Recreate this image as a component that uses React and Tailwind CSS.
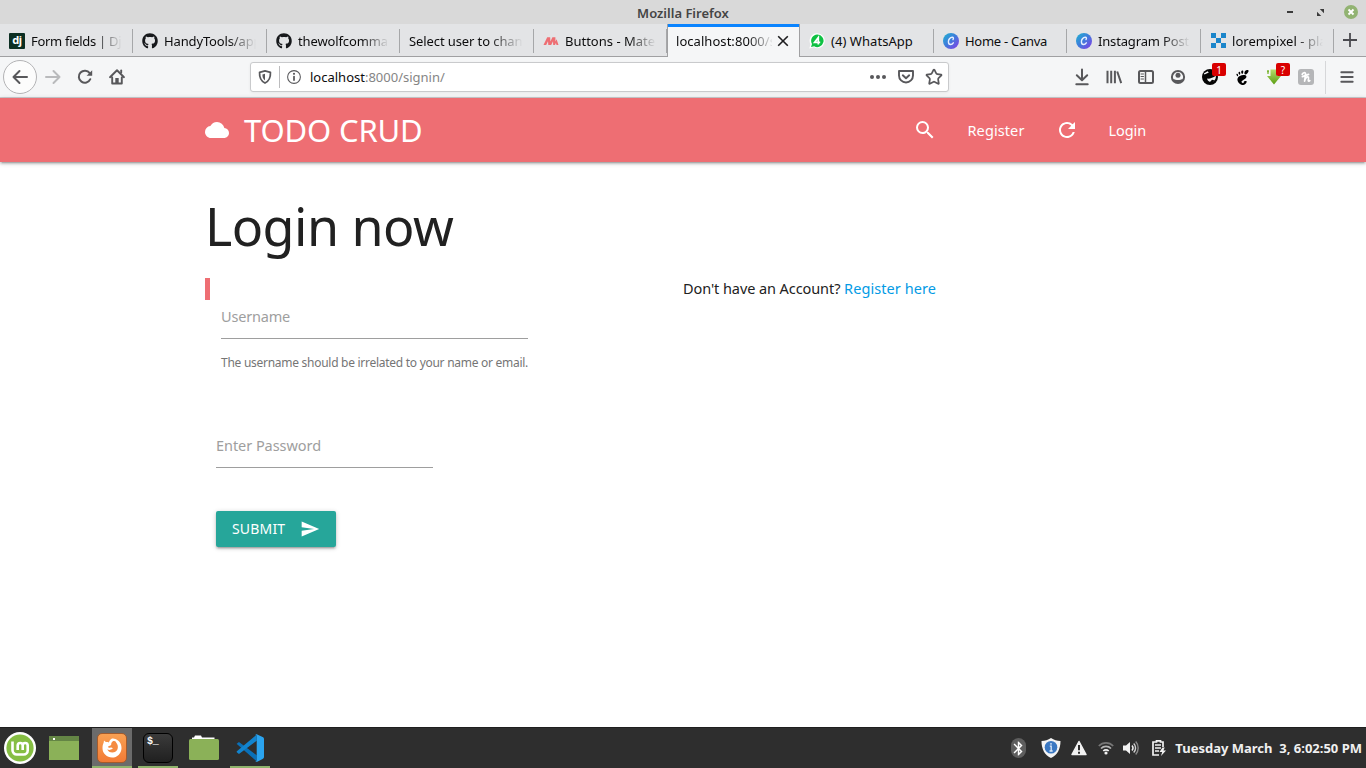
import React from "react";
import { FaGithub } from "react-icons/fa";
import { MdCloud, MdSearch, MdRefresh, MdSend, MdBluetooth } from "react-icons/md";
import { SiGnome } from "react-icons/si";
import { Star } from "lucide-react";

/* ---------- favicons ---------- */

const DjangoIcon = () => (
  <span className="flex size-4 items-center justify-center overflow-hidden rounded-[1px] bg-[#0c2f23] text-[11px] leading-none font-bold tracking-[-0.4px] text-white">
    <span className="-mt-[3px]">dj</span>
  </span>
);

const MaterializeIcon = () => (
  <svg viewBox="0 0 16 16" className="size-4" fill="#ee6e73">
    <path d="M0.500 12L4.200 4.200h3L7.400 8.600 9.400 4.200h3L12.400 8.400 13.600 6.200 15.500 12h-2L12.900 10 12 12H10.200L10 8.200 8.200 12H5.300L5 8.200 3.200 12z" />
  </svg>
);

const WhatsappIcon = () => (
  <svg viewBox="0 0 16 16" className="size-4">
    <path d="M8.3 0.3a7.4 7.4 0 1 1-3.3 14L0.3 15.6l1.2-4.4A7.4 7.4 0 0 1 8.3 0.3z" fill="#fff" />
    <path d="M8.2 1.5a6.3 6.3 0 1 1-3 11.8L2 14l1-3A6.3 6.3 0 0 1 8.2 1.5z" fill="#0fc143" />
    <path d="M9.300 11.600V4.600L5.600 9.400h5.600" fill="none" stroke="#fff" strokeWidth="1.700" />
  </svg>
);

const CanvaIcon = () => (
  <span className="flex size-4 items-center justify-center rounded-full bg-linear-to-br from-[#10b3cf] via-[#3f78dc] to-[#7a2be6]">
    <svg viewBox="0 0 16 16" className="size-4" fill="none" stroke="#e8f0ff" strokeWidth="1.400" strokeLinecap="round">
      <path d="M10 6.600c.8-1 .5-2.300-.8-2.300C7 4.300 5.400 6.600 5.400 8.700c0 1.700.9 2.800 2.200 2.800 1.200 0 2.200-.9 2.700-1.700" />
    </svg>
  </span>
);

const LorempixelIcon = () => (
  <svg viewBox="0 0 15 15" className="size-[15px]" fill="#1b86cb">
    <path d="M0 0h5v5H0zM10 0h5v5h-5zM5 5h5v5H5zM0 10h5v5H0zM10 10h5v5h-5z" />
  </svg>
);

const tabs = [
  { icon: <DjangoIcon />, title: "Form fields | Djan", width: "w-[133px]", tracking: "tracking-[-0.3px]" },
  { icon: <FaGithub className="size-4 text-[#17191c]" />, title: "HandyTools/app", width: "w-[134px]", tracking: "tracking-[-0.14px]" },
  { icon: <FaGithub className="size-4 text-[#17191c]" />, title: "thewolfcomman", width: "w-[133px]", tracking: "tracking-[-0.12px]" },
  { icon: null, title: "Select user to change", width: "w-[134px]", tracking: "tracking-[-0.1px]" },
  { icon: <MaterializeIcon />, title: "Buttons - Materi", width: "w-[133px]", tracking: "tracking-normal" },
  { icon: null, title: "localhost:8000/si", width: "w-[133px]", tracking: "tracking-[0.05px]", active: true },
  { icon: <WhatsappIcon />, title: "(4) WhatsApp", width: "w-[134px]", tracking: "tracking-[0.05px]", full: true },
  { icon: <CanvaIcon />, title: "Home - Canva", width: "w-[133px]", tracking: "tracking-[-0.28px]", full: true },
  { icon: <CanvaIcon />, title: "Instagram Posts", width: "w-[134px]", tracking: "tracking-[-0.16px]" },
  { icon: <LorempixelIcon />, title: "lorempixel - plac", width: "w-[133px]", tracking: "tracking-[0.04px]" },
];

function Tab({ tab }) {
  if (tab.active) {
    return (
      <div className={`${tab.width} z-10 -mb-px flex shrink-0 items-center border-x border-[#a0a0a2] bg-[#f5f6f7] pr-[10px] pl-2 shadow-[inset_0_3px_0_#0a84ff,inset_0_1px_0_#a0a0a2]`}>
        <span className={`${tab.tracking} mt-px w-[96px] overflow-hidden mask-r-from-75% mask-r-to-102% pt-px whitespace-nowrap`}>{tab.title}</span>
        <svg viewBox="0 0 12 12" className="ml-auto size-3" stroke="#1d1d1f" strokeWidth="1.600" fill="none">
          <path d="M1.200 1.200l9.600 9.600M10.800 1.200l-9.600 9.600" />
        </svg>
      </div>
    );
  }
  return (
    <div className={`${tab.width} flex shrink-0 items-center pt-px pl-[9px]`}>
      {tab.icon && <span className="mr-1.5 flex w-4 shrink-0 justify-center">{tab.icon}</span>}
      <span className={`${tab.tracking} min-w-0 flex-1 overflow-hidden pt-[2px] whitespace-nowrap ${tab.full ? "" : "mr-2.5 mask-r-from-70% mask-r-to-100%"}`}>{tab.title}</span>
      <span className="h-6 w-px shrink-0 bg-[#a6a7a9]" />
    </div>
  );
}

function WindowChrome() {
  return (
    <header className="shrink-0 text-[13px]">
      <div className="relative flex h-6 items-center justify-center bg-[#d9d9d9]">
        <span className="pt-px leading-5 font-semibold text-[#454545]">Mozilla Firefox</span>
        <div className="absolute top-0 right-[8px] flex h-6 items-center">
          <span className="mr-[24px] h-[2px] w-[6px] bg-[#3a3a3a]" />
          <svg viewBox="0 0 7 7" className="mr-[20px] size-[7px]" fill="#3a3a3a">
            <path d="M2.800 0H7v4.200L5.500 2.800 4.300 1.500zM0 2.800L1.500 4.200 2.700 5.500 4.200 7H0z" />
          </svg>
          <svg viewBox="0 0 14 14" className="size-[14px]">
            <circle cx="7" cy="7" r="7" fill="#92b372" />
            <path d="M4.500 4.500l5 5M9.500 4.500l-5 5" stroke="#fff" strokeWidth="1.900" />
          </svg>
        </div>
      </div>
      <div className="flex h-[33px] border-b border-[#a0a0a2] bg-[#e3e4e6] text-[#0c0c0d]">
        {tabs.map((tab) => (
          <Tab key={tab.title} tab={tab} />
        ))}
        <div className="flex flex-1 items-center justify-center">
          <svg viewBox="0 0 14 14" className="size-[14px]" stroke="#4a4a4f" strokeWidth="1.800">
            <path d="M7 0v14M0 7h14" />
          </svg>
        </div>
      </div>
      <Toolbar />
    </header>
  );
}

/* ---------- toolbar ---------- */

const Glyph = ({ children, className = "size-4", w = 2 }) => (
  <svg viewBox="0 0 16 16" className={`${className} overflow-visible`} fill="none" stroke="#58585b" strokeWidth={w} strokeLinecap="round" strokeLinejoin="round">
    {children}
  </svg>
);

const Slot = ({ children }) => <div className="relative flex size-8 items-center justify-center">{children}</div>;

const Badge = ({ children }) => (
  <span className="absolute top-[2px] left-[18px] flex h-[13px] w-[14px] items-center justify-center rounded-[2px] bg-[#d90000] text-[10px] leading-none text-white">
    {children}
  </span>
);

function Toolbar() {
  return (
    <div className="flex h-[41px] items-center border-b border-[#cccccf] bg-[#f5f6f7]">
      <div className="ml-[3px] flex size-[34px] items-center justify-center rounded-full border border-[#b3b3b5] bg-[#fcfcfc]">
        <Glyph>
          <path d="M15 8H1.500M7.500 2L1.500 8l6 6" />
        </Glyph>
      </div>
      <div className="ml-2 flex">
        <Glyph>
          <g stroke="#b9babc">
            <path d="M1 8h13.500M8.500 2l6 6-6 6" />
          </g>
        </Glyph>
      </div>
      <div className="ml-4 flex">
        <Glyph>
          <path d="M13.300 10.200A6 6 0 1 1 12.700 4.200" />
          <path d="M15.200 1.200v5.600H9.600z" fill="#58585b" stroke="none" />
        </Glyph>
      </div>
      <div className="ml-4 flex">
        <Glyph w={1.9}>
          <path d="M1 8.200L8 1.300l7 6.900M3.200 8.500v6h9.600v-6" />
          <path d="M6.300 9h3.400v5.500H6.300z" fill="#58585b" stroke="none" />
          <path d="M12.200 1.500v2" />
        </Glyph>
      </div>
      <div className="ml-[125px] flex h-[30px] w-[699px] items-center rounded-[3px] border border-[#c9cacc] bg-white shadow-[0_1px_3px_rgba(0,0,0,0.06)]">
        <div className="ml-[7px] flex">
          <Glyph className="size-[14px]">
            <path d="M8 1l6.200 1.700c.3 5.500-1.400 9.800-6.200 12.200C3.200 12.500 1.500 8.200 1.800 2.700z" />
            <path d="M8 4.200l-3 .8c0 3 .8 5.300 3 6.900z" fill="#58585b" stroke="none" />
          </Glyph>
        </div>
        <span className="ml-[7px] h-[22px] w-px bg-[#bcbcbe]" />
        <div className="ml-[7px] flex">
          <Glyph className="size-[14px]" w={1.2}>
            <circle cx="8" cy="8" r="7.3" />
            <path d="M8 7.500v4" strokeWidth="2" />
            <circle cx="8" cy="4.400" r="1.200" fill="#58585b" stroke="none" />
          </Glyph>
        </div>
        <span className="ml-[9px] pt-[2px] text-[13px] text-[#858585]">
          <span className="text-[#0c0c0d]">localhost</span>:8000/signin/
        </span>
        <div className="mr-1.5 ml-auto flex items-center gap-3">
          <Glyph>
            <g fill="#58585b" stroke="none">
              <circle cx="2" cy="8" r="2" />
              <circle cx="8" cy="8" r="2" />
              <circle cx="14" cy="8" r="2" />
            </g>
          </Glyph>
          <Glyph w={1.9}>
            <path d="M1 2h14v4.500a7 7 0 0 1-14 0z" />
            <path d="M4.800 6.300L8 9.300l3.200-3" />
          </Glyph>
          <Star className="-mx-px size-[18px] text-[#58585b]" strokeWidth={2.3} />
        </div>
      </div>
      <div className="ml-[117px] flex">
        <Slot>
          <Glyph>
            <path d="M8 0.500v10.500M2.800 6.300L8 11.300l5.200-5M2.300 15.200h11.400" />
          </Glyph>
        </Slot>
        <Slot>
          <Glyph w={2}>
            <path d="M1.500 1.700v12.600M5.200 1.700v12.600M8.900 1.700v12.600M11.200 2.500l4 11.600" strokeLinecap="butt" />
          </Glyph>
        </Slot>
        <Slot>
          <Glyph>
            <rect x="1" y="2" width="14" height="12" rx="1.500" />
            <path d="M7.500 2v12" strokeWidth="1.500" />
            <path d="M3 5h2.500M3 7.500h2.500M3 10h2.500" strokeWidth="1" />
          </Glyph>
        </Slot>
        <Slot>
          <Glyph>
            <circle cx="8" cy="8" r="6.100" />
            <circle cx="8" cy="6.300" r="2.500" fill="#58585b" stroke="none" />
            <path d="M3 9.700c1.600 1 3.200 1.200 5 1.200s3.400-.2 5-1.200c-.6 2.600-2.600 4.300-5 4.300S3.600 12.300 3 9.700z" fill="#58585b" stroke="none" />
          </Glyph>
        </Slot>
        <Slot>
          <svg viewBox="0 0 16 16" className="size-4">
            <circle cx="8" cy="8" r="8" fill="#050505" />
            <path d="M1.800 4.600l3.800-2.300 1.200 1.200-4.300 2z" fill="#f5f6f7" />
            <path d="M5 9.600c3.400.2 6-.8 8.800-2.800.4 3-1.400 5.700-4.300 6.200-2.300.2-4-1-4.500-3.400z" fill="#f5f6f7" />
            <path d="M7.500 13.500l2.500-2.800 2.300.6-1.600 2.300z" fill="#050505" />
          </svg>
          <Badge>1</Badge>
        </Slot>
        <Slot>
          <SiGnome className="size-[15px] text-black" />
        </Slot>
        <Slot>
          <svg viewBox="0 0 16 16" className="size-4 overflow-visible">
            <defs>
              <linearGradient id="dl" x1="0" y1="0" x2="0" y2="1">
                <stop offset="0" stopColor="#b5dc6c" />
                <stop offset="1" stopColor="#5a9e12" />
              </linearGradient>
            </defs>
            <path d="M4.500 0.500h6.500v6.500h4L8 15.500 1 7h3.500z" fill="url(#dl)" />
            <path d="M2 1v4M1 2.500h2" stroke="#7db737" strokeWidth="1.300" />
          </svg>
          <Badge>?</Badge>
        </Slot>
        <Slot>
          <span className="flex size-4 items-center justify-center rounded-[3px] bg-[#b5b6b8]">
            <svg viewBox="0 0 16 16" className="size-4" fill="none" stroke="#fff" strokeWidth="1.700" strokeLinecap="round" strokeLinejoin="round">
              <path d="M4.200 5.400c.6-1.700 3-2.300 3.300-1 .1 1.300-.6 5.200-.9 7.800.4-2.400 2-4.700 3.400-4.300 1.300.4.100 2.800.3 3.800.2.700 1 .5 1.500 0M4.400 7.600l6.200-2.200" />
            </svg>
          </span>
        </Slot>
      </div>
      <span className="ml-[3px] h-[33px] w-px bg-[#d6d7d9]" />
      <div className="ml-[14px] flex">
        <Glyph className="size-[14px]" w={2.2}>
          <path d="M1.500 2.500h13M1.500 8h13M1.500 13.500h13" />
        </Glyph>
      </div>
    </div>
  );
}

/* ---------- page ---------- */

function Navbar() {
  return (
    <nav className="z-10 h-16 shrink-0 bg-[#ee6e73] text-white shadow-[0_2px_2px_0_rgba(0,0,0,0.14),0_3px_1px_-2px_rgba(0,0,0,0.12),0_1px_5px_0_rgba(0,0,0,0.2)]">
      <div className="ml-[205px] flex h-16 w-[956px] items-center">
        <MdCloud className="size-6" />
        <span className="ml-[15px] pt-px text-[31px] tracking-[-0.15px]">TODO CRUD</span>
        <div className="ml-auto flex items-center text-[14.5px]">
          <MdSearch className="size-6" />
          <span className="ml-[30px] pt-[2px] tracking-[0.1px]">Register</span>
          <MdRefresh className="ml-[30px] size-6" />
          <span className="mr-[15px] ml-[30px] pt-[2px] tracking-[-0.1px]">Login</span>
        </div>
      </div>
    </nav>
  );
}

function LoginPage() {
  return (
    <main className="ml-[205px] flex min-h-0 w-[956px] flex-1 flex-col text-[14.5px] text-[#212121]">
      <h2 className="mt-[34px] h-[60px] text-[52px] leading-[59px] tracking-[-0.55px] whitespace-nowrap">Login now</h2>
      <div className="mt-[22px] flex">
        <form className="w-[478px]">
          <div className="h-[22px] w-[5px] bg-[#ee6e73]" />
          <div className="ml-4 flex w-[307px] flex-col">
            <label className="flex h-[39px] items-start border-b border-[#9e9e9e] pt-[5px] leading-[22px] tracking-[-0.19px] text-[#9e9e9e]">Username</label>
            <span className="mt-[14px] text-xs leading-5 tracking-[-0.274px] whitespace-nowrap text-[#757575]">
              The username should be irrelated to your name or email.
            </span>
          </div>
          <label className="mt-[56px] ml-[11px] flex h-[39px] w-[217px] items-start border-b border-[#9e9e9e] pt-[5px] leading-[22px] tracking-[-0.05px] text-[#9e9e9e]">
            Enter Password
          </label>
          <button
            type="button"
            className="mt-[43px] ml-[11px] flex h-9 w-[120px] items-center rounded-[2px] bg-[#26a69a] pl-4 text-[14px] text-white shadow-[0_2px_2px_0_rgba(0,0,0,0.14),0_3px_1px_-2px_rgba(0,0,0,0.12),0_1px_5px_0_rgba(0,0,0,0.2)]"
          >
            <span className="pb-[2px] tracking-[0.18px]">SUBMIT</span>
            <MdSend className="ml-[15px] size-5" />
          </button>
        </form>
        <p className="-mt-px leading-[22px] tracking-[-0.08px] whitespace-nowrap">
          Don't have an Account? <a className="tracking-[0.08px] text-[#039be5]">Register here</a>
        </p>
      </div>
    </main>
  );
}

/* ---------- desktop panel ---------- */

const Task = ({ children, open, focused }) => (
  <div className={`flex h-10 w-10 items-center justify-center border-b-2 pt-[2px] ${focused ? "bg-[#6b6b6b]" : ""} ${open ? "border-[#8fb36c]" : "border-transparent"}`}>
    {children}
  </div>
);

const FirefoxMark = () => (
  <svg viewBox="0 0 20 20" className="size-5">
    <path d="M10 0.500c1.500 0 3 .2 4.500 1.100 3.200 1.700 5.200 5 5 8.800-.2 5-4.300 9.100-9.400 9.100S.5 15.400.5 10.200c0-2 .3-3.800 1.200-5.700l.3-2 1.800 1.600c1-.2 2-.1 3 .4C7.500 2.500 8.500 1.200 10 .5z" fill="#fff" />
    <path d="M9.300 5.200c1-2.600 3.600-2.500 4.500-1.500.2 1 1.500 2 1.900 3.800.8 3.800-1.500 7-5.200 7-2.600 0-4.600-1.300-5.200-3.300 1.400 1 2.700.9 3.900.1.700-.5 1.700-.2 1.500-.9-.4-1-1.500-1.200-2.600-.7-1 .4-1.900 0-2-1 .3-.8 1.600-.5 2.300-1.100.6-.6 1-1 .9-2.400z" fill="#f58b42" />
  </svg>
);

const VsCode = () => (
  <svg viewBox="0 0 100 100" className="size-[28px]">
    <path d="M2 36l6-6c1.500-1.200 3.500-1.200 5 0L74 76v22L4 37z" fill="#0a70b8" />
    <path d="M2 64l6 6c1.500 1.200 3.500 1.200 5 0L74 24V2L3 62z" fill="#1284cf" />
    <path d="M72 99c-2-.5-3-1.200-4.500-2.500C70 99 74 97 74 94V6c0-3-4-5-6.500-2.500C69 2 71 .5 74 1l21 10c3 1.500 5 4 5 7v64c0 3-2 5.500-5 7L76 99z" fill="#2ba4ef" />
  </svg>
);

function Panel() {
  return (
    <footer className="flex h-[41px] shrink-0 border-t border-[#1f1f1f] bg-[#2e2e2e]">
      <div className="flex gap-1">
        <Task>
          <svg viewBox="0 0 32 32" className="size-8 shrink-0">
            <circle cx="16" cy="16" r="16" fill="#fff" />
            <circle cx="16" cy="16" r="13.600" fill="#86be43" />
            <path d="M8.500 9.500v8.700a4.300 4.300 0 0 0 4.300 4.300h6.900a4 4 0 0 0 4-4v-5a2.500 2.500 0 0 0-5 0V18M18.700 13.500a2.500 2.500 0 0 0-5 0V18" fill="none" stroke="#fff" strokeWidth="2.600" />
          </svg>
        </Task>
        <Task>
          <svg viewBox="0 0 30 24" className="h-6 w-[30px]">
            <rect width="30" height="24" fill="#8bb158" />
            <rect width="30" height="5" fill="#648545" />
            <rect x="4" y="2" width="2" height="2" fill="#fff" />
          </svg>
        </Task>
      </div>
      <div className="ml-2 flex gap-1.5">
        <Task open focused>
          <span className="flex size-[30px] items-center justify-center rounded-[5px] border border-[#a45b2c] bg-linear-to-b from-[#f9a052] to-[#f27a35]">
            <FirefoxMark />
          </span>
        </Task>
        <Task open>
          <span className="flex size-[30px] items-start rounded-[6px] border border-black bg-linear-to-b from-[#3b3b3b] to-[#202020] pt-[3px] pl-[3px] font-['Liberation_Mono'] text-[10px] leading-none font-bold tracking-[-0.2px] text-white">
            $_
          </span>
        </Task>
        <Task>
          <svg viewBox="0 0 30 25" className="mb-px h-[25px] w-[30px]">
            <path d="M3 5V2.500h2L6 0.500h6l1 2h12.500V5z" fill="#fff" />
            <rect y="4" width="30" height="21" rx="1.500" fill="#8bb158" />
          </svg>
        </Task>
        <Task open>
          <VsCode />
        </Task>
      </div>
      <div className="ml-auto flex items-center pr-[4px]">
        <span className="flex h-5 w-[15px] items-center justify-center rounded-full bg-[#5e5e5e]">
          <MdBluetooth className="size-[17px] shrink-0 text-white" />
        </span>
        <svg viewBox="0 0 20 20" className="ml-[15px] size-5">
          <path d="M10 0c3 2 6 2.800 9.500 3C19.500 11 16.500 17 10 20 3.500 17 .5 11 .5 3 4 2.800 7 2 10 0z" fill="#f4f4f4" />
          <circle cx="10" cy="9.300" r="6.300" fill="#3b78c2" />
          <path d="M10 5v1.800M8.800 8.200h1.400V13M8.500 13h3.200" stroke="#dce9f8" strokeWidth="1.300" fill="none" />
        </svg>
        <svg viewBox="0 0 16 16" className="ml-[10px] size-4">
          <path d="M8 1.500l7 13H1z" fill="#f2f2f2" stroke="#f2f2f2" strokeWidth="1.500" strokeLinejoin="round" />
          <path d="M8 5v5.200M8 11.700v2" stroke="#2e2e2e" strokeWidth="2" />
        </svg>
        <svg viewBox="0 0 16 16" className="ml-[11px] size-4" fill="none" strokeWidth="1.700">
          <path d="M.8 6c4-4.200 10.400-4.200 14.400 0" stroke="#777" />
          <path d="M3 8.500c2.800-2.900 7.200-2.900 10 0" stroke="#b5b5b5" />
          <path d="M5.300 11c1.600-1.600 3.800-1.600 5.400 0" stroke="#f2f2f2" />
          <circle cx="8" cy="13" r="1.600" fill="#f2f2f2" />
        </svg>
        <svg viewBox="0 0 16 16" className="ml-[9px] size-4" fill="none" strokeWidth="1.400">
          <path d="M0 5.500h3L7 2v12l-4-3.500H0z" fill="#f2f2f2" />
          <path d="M9 5.500c1.300 1.500 1.300 3.500 0 5" stroke="#f2f2f2" />
          <path d="M10.700 3.500c2.500 2.500 2.500 6.500 0 9" stroke="#d0d0d0" />
          <path d="M12.700 1.500c3.300 3.700 3.300 9.300 0 13" stroke="#888" />
        </svg>
        <svg viewBox="0 0 14 16" className="mr-[-1px] ml-[13px] h-4 w-[14px]" fill="none" stroke="#f2f2f2">
          <path d="M11 7V2H8.500V.8h-4V2H1v13h6" strokeWidth="1.700" />
          <path d="M3 5h6M3 8h6M3 11h4" strokeWidth="1.500" />
          <path d="M10.500 7.500L7.500 12h2.700l-1.200 4 5-5.500h-2.600l1.300-3z" fill="#f2f2f2" stroke="none" />
        </svg>
        <span className="ml-[10px] pt-[2px] text-[13px] font-bold whitespace-pre text-[#f0f0f0]">Tuesday March  3, 6:02:50 PM</span>
      </div>
    </footer>
  );
}

export default function App() {
  return (
    <div className="flex h-[768px] w-[1366px] flex-col overflow-hidden bg-white font-['Noto_Sans',sans-serif]">
      <WindowChrome />
      <Navbar />
      <LoginPage />
      <Panel />
    </div>
  );
}
